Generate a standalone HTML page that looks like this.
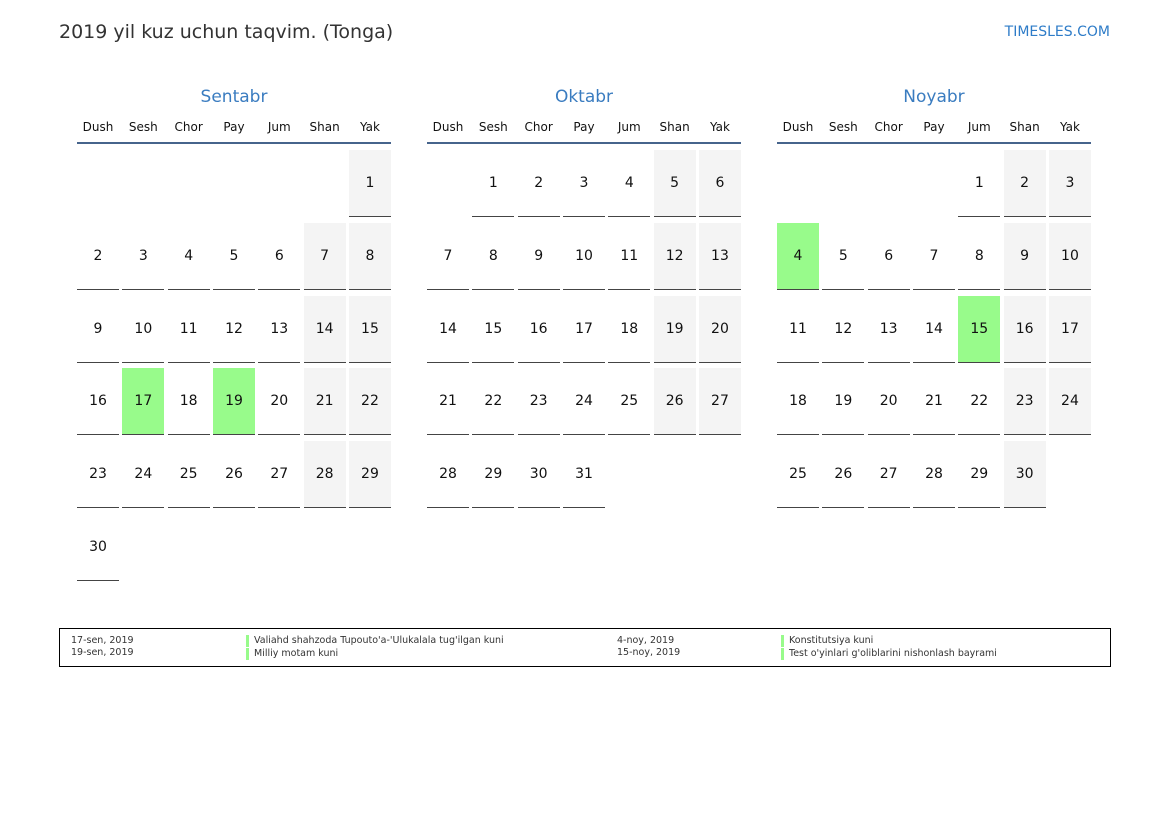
<!DOCTYPE html>
<html><head><meta charset="utf-8"><style>
*{margin:0;padding:0;box-sizing:border-box}
body{width:1169px;height:827px;background:#fff;font-family:"DejaVu Sans","Liberation Sans",sans-serif;position:relative;overflow:hidden;color:#111}
.t{position:absolute;left:59px;top:21px;font-size:19px;color:#333}
.logo{position:absolute;right:59px;top:24px;font-size:14px;color:#2e7cc8}
.m{position:absolute;top:86px;width:314px}
.mt{text-align:center;font-size:17px;color:#3a7cc0;height:24px;line-height:22px}
.wd{display:grid;grid-template-columns:repeat(7,42px);column-gap:3.33px;font-size:12px;text-align:center;margin-top:10px;height:24px;border-bottom:2px solid #46648c}
.g{display:grid;grid-template-columns:repeat(7,42px);column-gap:3.33px;row-gap:5.8px;margin-top:6px}
.g div{height:67px;border-bottom:1px solid #444;text-align:center;line-height:66px;font-size:14px}
.g div:nth-child(7n+6),.g div:nth-child(7n){background:#f4f4f4}
.g div.e{background:none!important;border:none}
.g div.h{background:#98fb8b!important}
.leg{position:absolute;left:59px;top:628px;width:1052px;height:39px;border:1px solid #000;font-size:9.5px;color:#333}
.leg span{position:absolute;line-height:12px}
.bar{border-left:3px solid #98fb8b;padding-left:5px}
</style></head><body>
<div class="t">2019 yil kuz uchun taqvim. (Tonga)</div>
<div class="logo">TIMESLES.COM</div>

<div class="m" style="left:77px">
<div class="mt">Sentabr</div>
<div class="wd"><span>Dush</span><span>Sesh</span><span>Chor</span><span>Pay</span><span>Jum</span><span>Shan</span><span>Yak</span></div>
<div class="g">
<div class="e"></div><div class="e"></div><div class="e"></div><div class="e"></div><div class="e"></div><div class="e"></div><div>1</div>
<div>2</div><div>3</div><div>4</div><div>5</div><div>6</div><div>7</div><div>8</div>
<div>9</div><div>10</div><div>11</div><div>12</div><div>13</div><div>14</div><div>15</div>
<div>16</div><div class="h">17</div><div>18</div><div class="h">19</div><div>20</div><div>21</div><div>22</div>
<div>23</div><div>24</div><div>25</div><div>26</div><div>27</div><div>28</div><div>29</div>
<div>30</div>
</div></div>

<div class="m" style="left:427px">
<div class="mt">Oktabr</div>
<div class="wd"><span>Dush</span><span>Sesh</span><span>Chor</span><span>Pay</span><span>Jum</span><span>Shan</span><span>Yak</span></div>
<div class="g">
<div class="e"></div><div>1</div><div>2</div><div>3</div><div>4</div><div>5</div><div>6</div>
<div>7</div><div>8</div><div>9</div><div>10</div><div>11</div><div>12</div><div>13</div>
<div>14</div><div>15</div><div>16</div><div>17</div><div>18</div><div>19</div><div>20</div>
<div>21</div><div>22</div><div>23</div><div>24</div><div>25</div><div>26</div><div>27</div>
<div>28</div><div>29</div><div>30</div><div>31</div>
</div></div>

<div class="m" style="left:777px">
<div class="mt">Noyabr</div>
<div class="wd"><span>Dush</span><span>Sesh</span><span>Chor</span><span>Pay</span><span>Jum</span><span>Shan</span><span>Yak</span></div>
<div class="g">
<div class="e"></div><div class="e"></div><div class="e"></div><div class="e"></div><div>1</div><div>2</div><div>3</div>
<div class="h">4</div><div>5</div><div>6</div><div>7</div><div>8</div><div>9</div><div>10</div>
<div>11</div><div>12</div><div>13</div><div>14</div><div class="h">15</div><div>16</div><div>17</div>
<div>18</div><div>19</div><div>20</div><div>21</div><div>22</div><div>23</div><div>24</div>
<div>25</div><div>26</div><div>27</div><div>28</div><div>29</div><div>30</div>
</div></div>

<div class="leg">
<span style="left:11px;top:6px">17-sen, 2019</span>
<span style="left:11px;top:18px">19-sen, 2019</span>
<span class="bar" style="left:186px;top:6px">Valiahd shahzoda Tupouto'a-'Ulukalala tug'ilgan kuni</span>
<span class="bar" style="left:186px;top:19px">Milliy motam kuni</span>
<span style="left:557px;top:6px">4-noy, 2019</span>
<span style="left:557px;top:18px">15-noy, 2019</span>
<span class="bar" style="left:721px;top:6px">Konstitutsiya kuni</span>
<span class="bar" style="left:721px;top:19px">Test o'yinlari g'oliblarini nishonlash bayrami</span>
</div>
</body></html>
